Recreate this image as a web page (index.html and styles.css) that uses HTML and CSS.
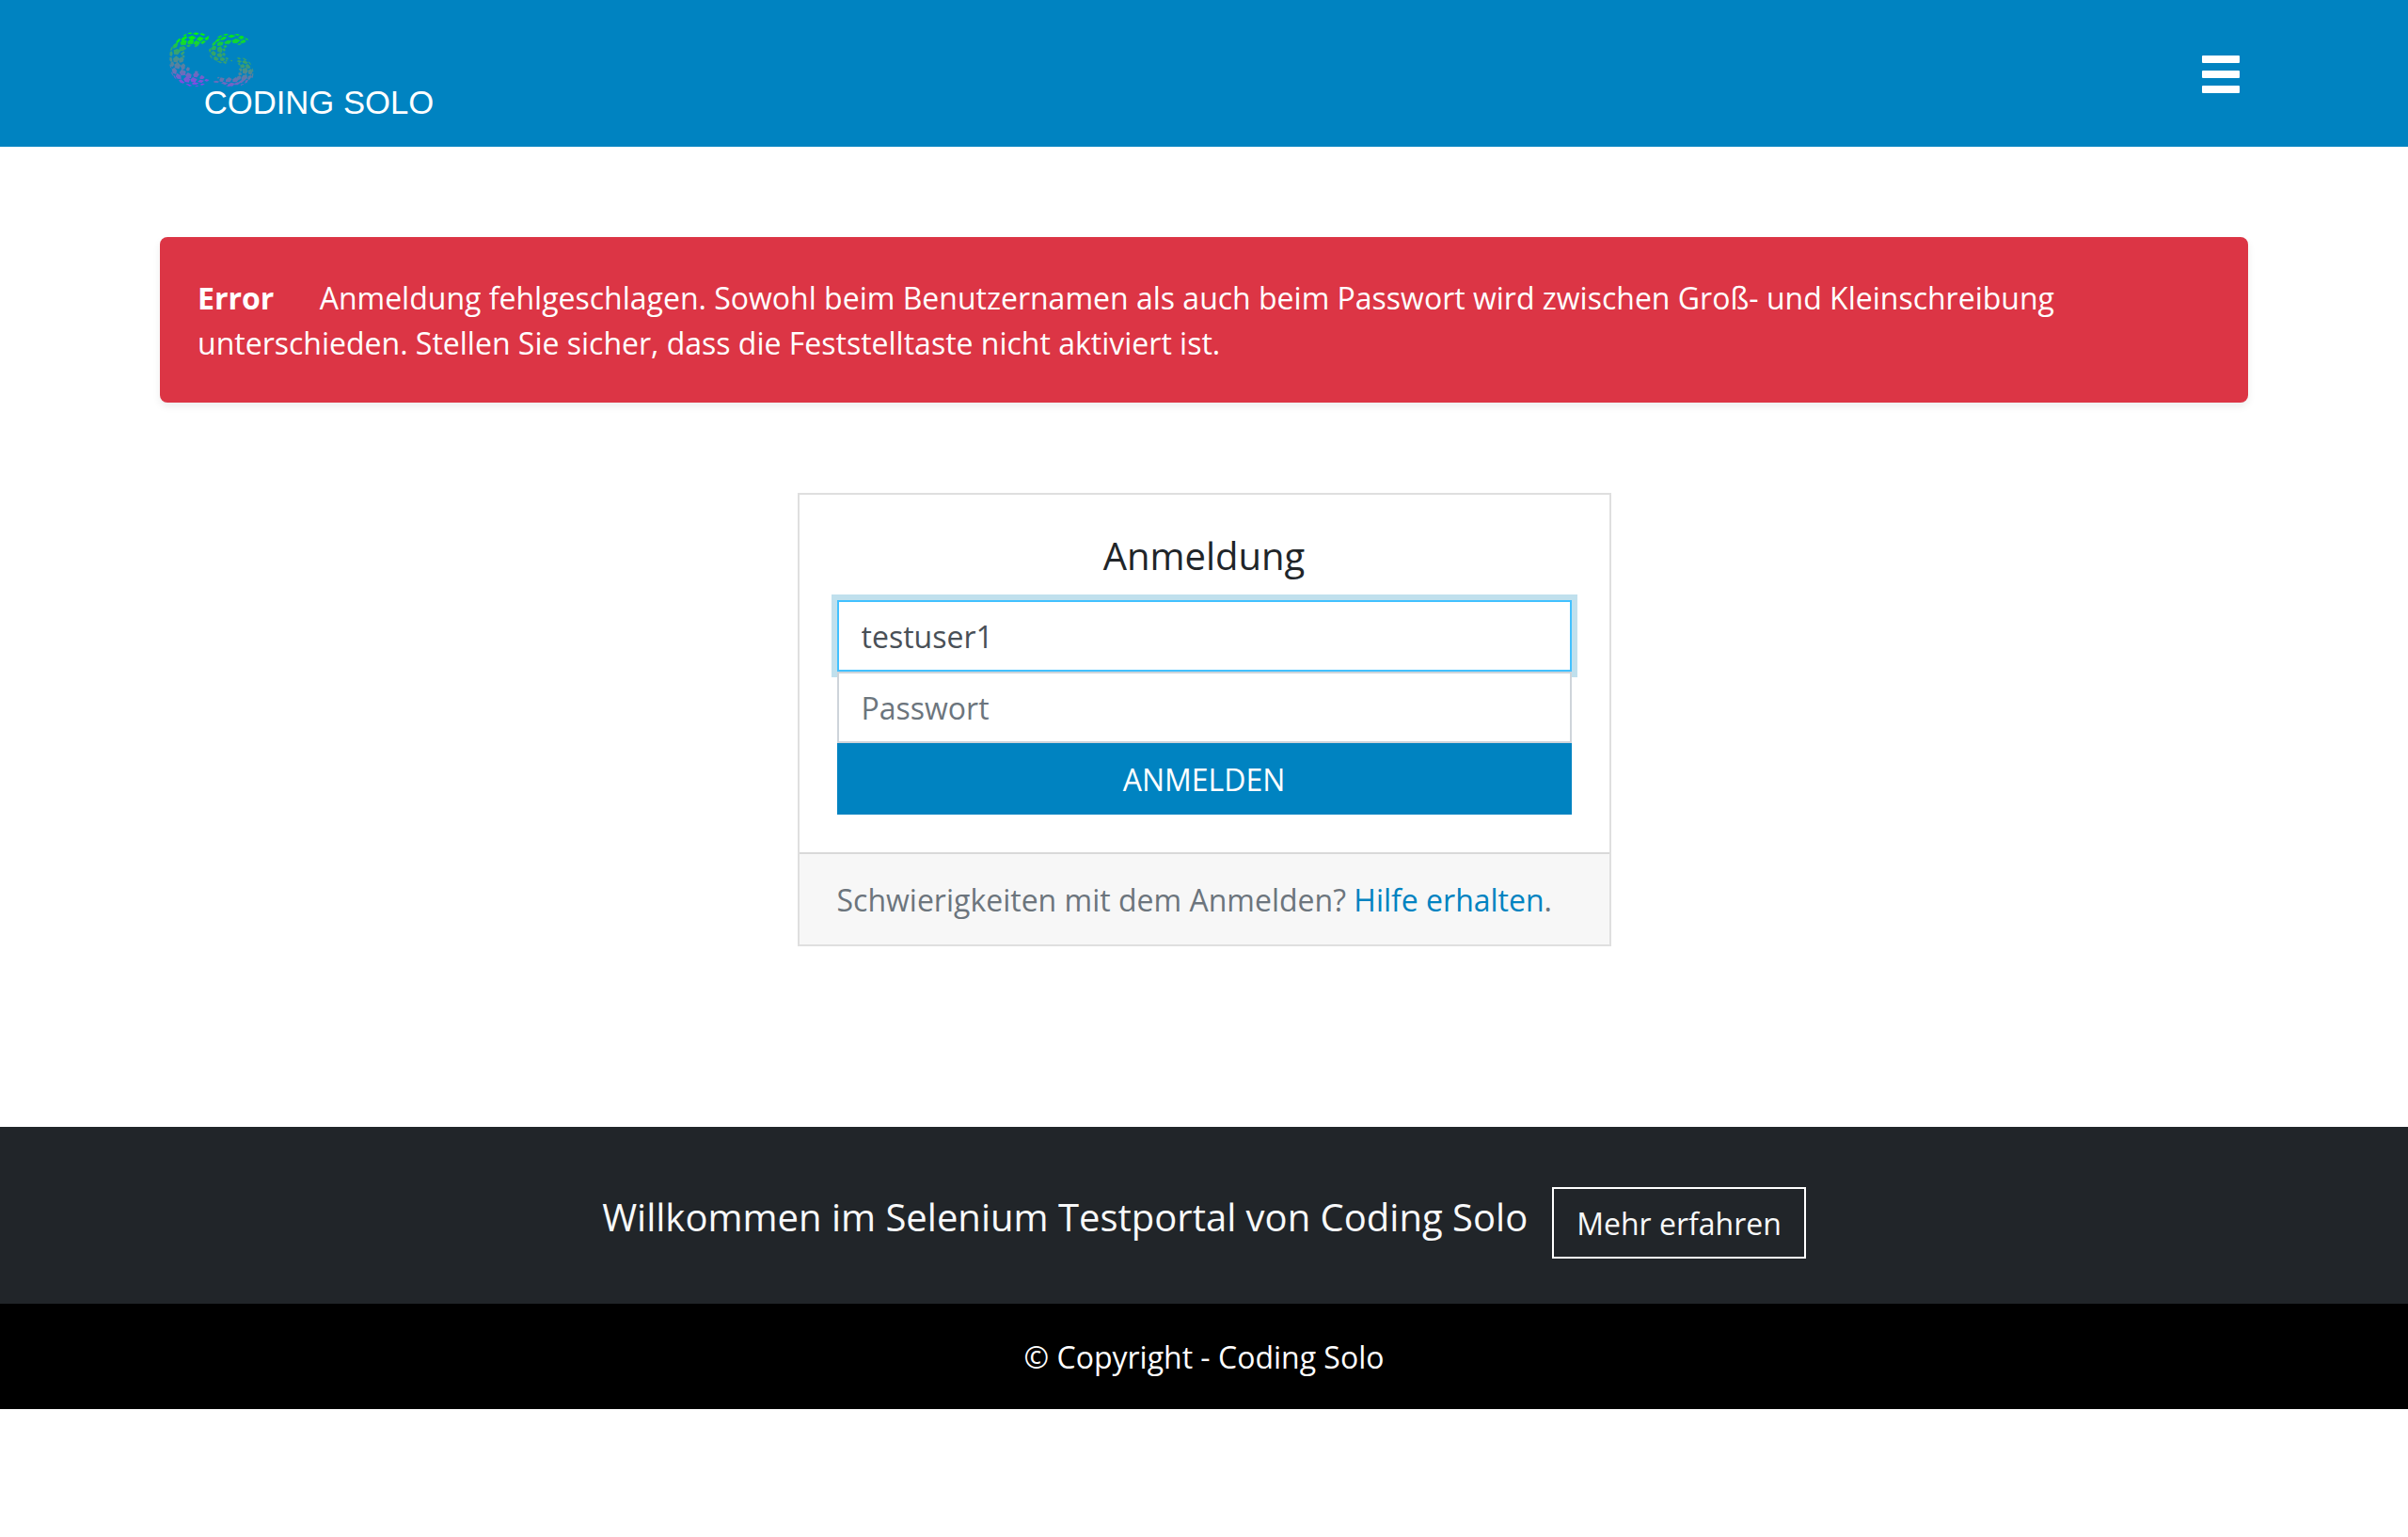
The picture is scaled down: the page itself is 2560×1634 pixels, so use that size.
FILE: index.html
```html
<!DOCTYPE html>
<html lang="de">
<head>
<meta charset="utf-8">
<meta name="viewport" content="width=device-width, initial-scale=1">
<title>Anmeldung - Coding Solo</title>
<link rel="stylesheet" href="styles.css">
</head>
<body>
<header class="site-header">
  <div class="container header-row">
    <a class="brand" href="#" aria-label="Coding Solo">
      <svg class="logo" viewBox="30 -2 900 348">
        <defs>
          <linearGradient id="fade-c" gradientUnits="userSpaceOnUse" x1="0" y1="40" x2="0" y2="214">
            <stop offset="0" stop-color="#00ff00"/>
            <stop offset=".16" stop-color="#0bea1c"/>
            <stop offset=".28" stop-color="#28b35a"/>
            <stop offset=".5" stop-color="#4b8f8c"/>
            <stop offset=".72" stop-color="#6873b4"/>
            <stop offset="1" stop-color="#8a3ff0"/>
          </linearGradient>
          <linearGradient id="fade-s" gradientUnits="userSpaceOnUse" x1="0" y1="40" x2="0" y2="214">
            <stop offset="0" stop-color="#00f010"/>
            <stop offset=".2" stop-color="#12d03c"/>
            <stop offset=".35" stop-color="#32a468"/>
            <stop offset=".6" stop-color="#38a070"/>
            <stop offset=".8" stop-color="#5a80a0"/>
            <stop offset="1" stop-color="#7a5cd0"/>
          </linearGradient>
          <clipPath id="tiles-c">
            <path d="M118 45l8-4 8 2-6 4zM135 46l9-5 11 3-7 6zM156 47l8-3 11 4-6 4zM104 51l8-4 5 1-8 5zM172 60l15-8-3 12-7 3z"/>
            <path d="M119 58l14-7 12 7-12 9zM146 63l11-9 14 6-12 11zM101 59l11-6 6 4-11 9-10 1zM136 77l9-10 14 6-9 13zM159 75l9-8 9 3-10 9z"/>
            <path d="M118 71l9-7 12 4-5 11-15 1zM94 74l8-8 14 1-3 14-15 2zM82 70l8-8 7-1-6 11-9 6zM114 85l5-4 11 1-8 7zM139 85l7-4 7 2-9 6z"/>
            <path d="M93 88l14-3 8 8-13 8-12-2zM72 83l7-6 9-1-4 13-11 4zM74 98l12-5 10 8-9 12-12-2zM64 94l4-7 4-1-3 11-6 3zM96 108l10-7 3 5-9 10z"/>
            <path d="M62 104l6-3 3 9-4 9-6-5zM72 125l10-9 10 8-7 14-11-3zM90 126l9-7 8 7-4 10-11 2zM61 121l6-1 3 10-3 7-6-6zM100 118l6-5 4 6-5 4z"/>
            <path d="M76 144l11-8 9 10-5 12-13-3zM95 148l10-8 6 6-2 12-9 2zM64 138l8-4 4 10-6 8-6-4zM68 159l8-6 8 9-2 13-11-4zM60 143l4 2 4 14-5-7z"/>
            <path d="M92 169l7-10 14 6-2 13-14 1zM113 159l5-7 7 2-1 9-7 2zM80 182l5-11 12 8 1 11-12-1zM111 178l8-9 12 6-2 12-12 0zM73 178l3 0 7 13-6-4zM66 166l5 7 2 9-6-9z"/>
            <path d="M136 175l9-8 11 8-8 10-10-2zM105 190l9-8 13 8-5 11-12-2zM90 194l7-3 12 10-5 3-9-3zM127 192l8-8 14 7-6 9-12 0zM157 185l6-8 10 7-5 6-10 0zM140 169l4-5 9 3-3 3z"/>
            <path d="M132 204l7-4 15 3-8 5-12-1zM150 199l8-7 13 3-8 7zM112 205l8 1 13 5-9 2zM172 195l5-6 11 4-8 5zM157 208l8-4 9 1-9 5zM141 212l9-2 4 2-7 2z"/>
          </clipPath>
          <clipPath id="tiles-s">
            <path d="M230 49l12-4 7 2-9 5zM246 54l12-6 14 5-14 6zM266 48l11-2 8 3-6 3zM284 52l9 0 7 5-8 1zM278 58l10-4 10 6-8 4zM212 58l10-7 8 0-9 8zM300 59l7 1 7 5-8 1z"/>
            <path d="M224 60l11-6 9 3-9 8-12 2zM260 67l13-6 14 5-11 10-13 0zM286 70l13-7 6 8-9 5-9-1zM235 73l11-7 14 2-9 10-13 0zM207 68l8-7 8 1-4 7-10 4zM276 80l8-4 8 2-9 4z"/>
            <path d="M212 77l8-6 13 1-4 11-15 2zM196 80l6-8 8-3-3 11-9 5zM192 93l8-9 10 2-2 11-12 1zM213 90l11-4 6 10-3 10-13-3zM232 86l7-4 6 3-6 7zM229 95l7-3 4 6-6 5z"/>
            <path d="M185 97l6-5 3 7-5 7zM192 106l8-6 9 6-2 10-10-1zM212 110l11-4 7 8-5 8-11-3zM228 109l7-3 5 6-6 6zM189 111l7 8 1 7-7-7zM201 121l8-3 9 8-6 6-9-3zM221 125l9-5 9 6-7 7-8-1zM239 121l7 1 3 4-6 3zM211 133l9 0 9 5-6 2zM230 136l7-3 7 5-5 4zM240 128l5 3-1 4-5-2zM256 130l5 0 0 4-5-1z"/>
            <path d="M275 123l6-2 8 4-6 3zM292 123l7 0 9 6-7 1zM275 133l7-4 10 5-8 5zM293 133l8-3 11 8-7 4-10-3zM311 134l6 3 5 9-6-4zM278 140l6 0 4 6-6 0zM286 147l9-5 7 7-5 6-10-2zM303 145l8-3 8 10-4 6-10-4z"/>
            <path d="M294 157l13-3 4 11-6 9-11-3zM312 162l9-5 5 10-5 10-9-4zM281 157l8-2 4 6-5 7zM324 154l4 8 0 6-4-5zM280 171l6-3 6 5-3 6-8-2zM294 179l13-4 2 12-10 8-10-4zM312 180l9-2 2 5-8 10-6-2zM325 172l4 1-3 13-4 0z"/>
            <path d="M276 183l8-4 6 5-5 8-10-1zM262 191l10-7 11 7-9 9-12-1zM283 198l9-6 9 2-11 9-9 0zM304 194l8-1-4 8-8 3zM268 204l10-4 9 2-9 7-10 0zM287 208l8-3 4 0-10 6zM240 192l10-8 10 6-7 10-13-1zM246 207l12-6 12 4-9 8-13-1zM220 192l4-7 12 3-5 11-10-1zM225 203l8-4 14 4-9 6zM200 198l9-3 11 3-6 4-10-1zM212 186l5-3 4 2-5 4zM240 211l7-1 7 3-6 1z"/>
          </clipPath>
        </defs>
        <path class="mark-c" clip-path="url(#tiles-c)" d="M50 30h145v190H50z"/>
        <path class="mark-s" clip-path="url(#tiles-s)" d="M180 30h155v190H180z"/>
        <text class="wordmark" x="170" y="301">CODING SOLO</text>
      </svg>
    </a>
    <button class="menu-toggle" type="button" aria-label="Menü">
      <svg class="bars" viewBox="0 0 40 40"><rect width="40" height="8" rx="1"/><rect y="16" width="40" height="8" rx="1"/><rect y="32" width="40" height="8" rx="1"/></svg>
    </button>
  </div>
</header>

<main class="container main">
  <div class="alert" role="alert"><strong class="alert-title">Error</strong> Anmeldung fehlgeschlagen. Sowohl beim Benutzernamen als auch beim Passwort wird zwischen Groß- und Kleinschreibung unterschieden. Stellen Sie sicher, dass die Feststelltaste nicht aktiviert ist.</div>

  <section class="card">
    <form class="card-body">
      <h1 class="heading card-title">Anmeldung</h1>
      <input class="field active" type="text" name="user" value="testuser1" aria-label="Benutzername">
      <input class="field" type="password" name="password" placeholder="Passwort" aria-label="Passwort">
      <button class="submit" type="submit">ANMELDEN</button>
    </form>
    <div class="card-footer">Schwierigkeiten mit dem Anmelden? <a class="link" href="#">Hilfe erhalten</a>.</div>
  </section>
</main>

<footer>
  <div class="welcome">
    <h2 class="heading welcome-title">Willkommen im Selenium Testportal von Coding Solo</h2>
    <a class="more" href="#">Mehr erfahren</a>
  </div>
  <div class="copyright">© Copyright - Coding Solo</div>
</footer>
</body>
</html>
```
FILE: styles.css
```css
*, *::before, *::after { box-sizing: border-box; }

body {
  margin: 0;
  background: #fff;
  color: #212529;
  font: 400 32px/48px "Open Sans", "Noto Sans", sans-serif;
}

.container {
  width: 100%;
  max-width: 2280px;
  margin: 0 auto;
  padding-left: 30px;
  padding-right: 30px;
}

.heading {
  margin: 0;
  font-size: 40px;
  font-weight: 400;
  line-height: 48px;
}

.site-header { background: #0083c1; padding: 20px 0; }
.header-row { display: flex; align-items: center; justify-content: space-between; }
.brand { display: block; }
.logo { display: block; width: 300px; height: 116px; }
.mark-c { fill: url(#fade-c); }
.mark-s { fill: url(#fade-s); }
.wordmark { fill: #fff; font: 104px "Liberation Sans", Arial, sans-serif; }

.menu-toggle {
  padding: 10px 9px 8px;
  border: 0;
  background: none;
  color: #fff;
}
.bars { display: block; width: 40px; height: 40px; fill: currentColor; }

.main { padding-top: 96px; padding-bottom: 192px; }

.alert {
  padding: 41px 40px 39px;
  border-radius: 8px;
  background: #dc3545;
  color: #fff;
  box-shadow: 0 4px 8px rgba(0, 0, 0, .075);
}
.alert-title { margin-right: 40px; font-weight: 700; }

.card {
  width: 100%;
  max-width: 865px;
  margin: 96px auto 0;
  border: 2px solid #dfdfdf;
}
.card-body { display: flex; flex-direction: column; padding: 41px 40px 40px; }
.card-title { margin-bottom: 23px; text-align: center; }

.field, .submit {
  width: 100%;
  padding: 12px 24px;
  border: 2px solid #ced4da;
  border-radius: 0;
  font: inherit;
}
.field { height: 76px; background: #fff; color: #495057; outline: 0; position: relative; }
.field::placeholder { color: #6c757d; opacity: 1; }
.field.active { border-color: #42c1ff; box-shadow: 0 0 0 6px #c0e0ed; }
.submit { padding: 13px 24px 11px; border-color: #0083c1; background: #0083c1; color: #fff; }

.card-footer {
  padding: 25px 40px 23px;
  border-top: 2px solid #d9d9d9;
  background: #f7f7f7;
  color: #6c757d;
}
.link { color: #0083c1; text-decoration: none; }

.welcome {
  display: flex;
  align-items: center;
  justify-content: center;
  gap: 26px;
  padding: 64px 30px 48px;
  background: #212529;
  color: #f8f9fa;
}
.welcome-title { padding-bottom: 12px; }
.more {
  padding: 13px 24px 11px;
  border: 2px solid #fff;
  color: #f8f9fa;
  text-decoration: none;
}

.copyright { padding: 33px 32px 31px; background: #000; color: #fff; text-align: center; }
```
